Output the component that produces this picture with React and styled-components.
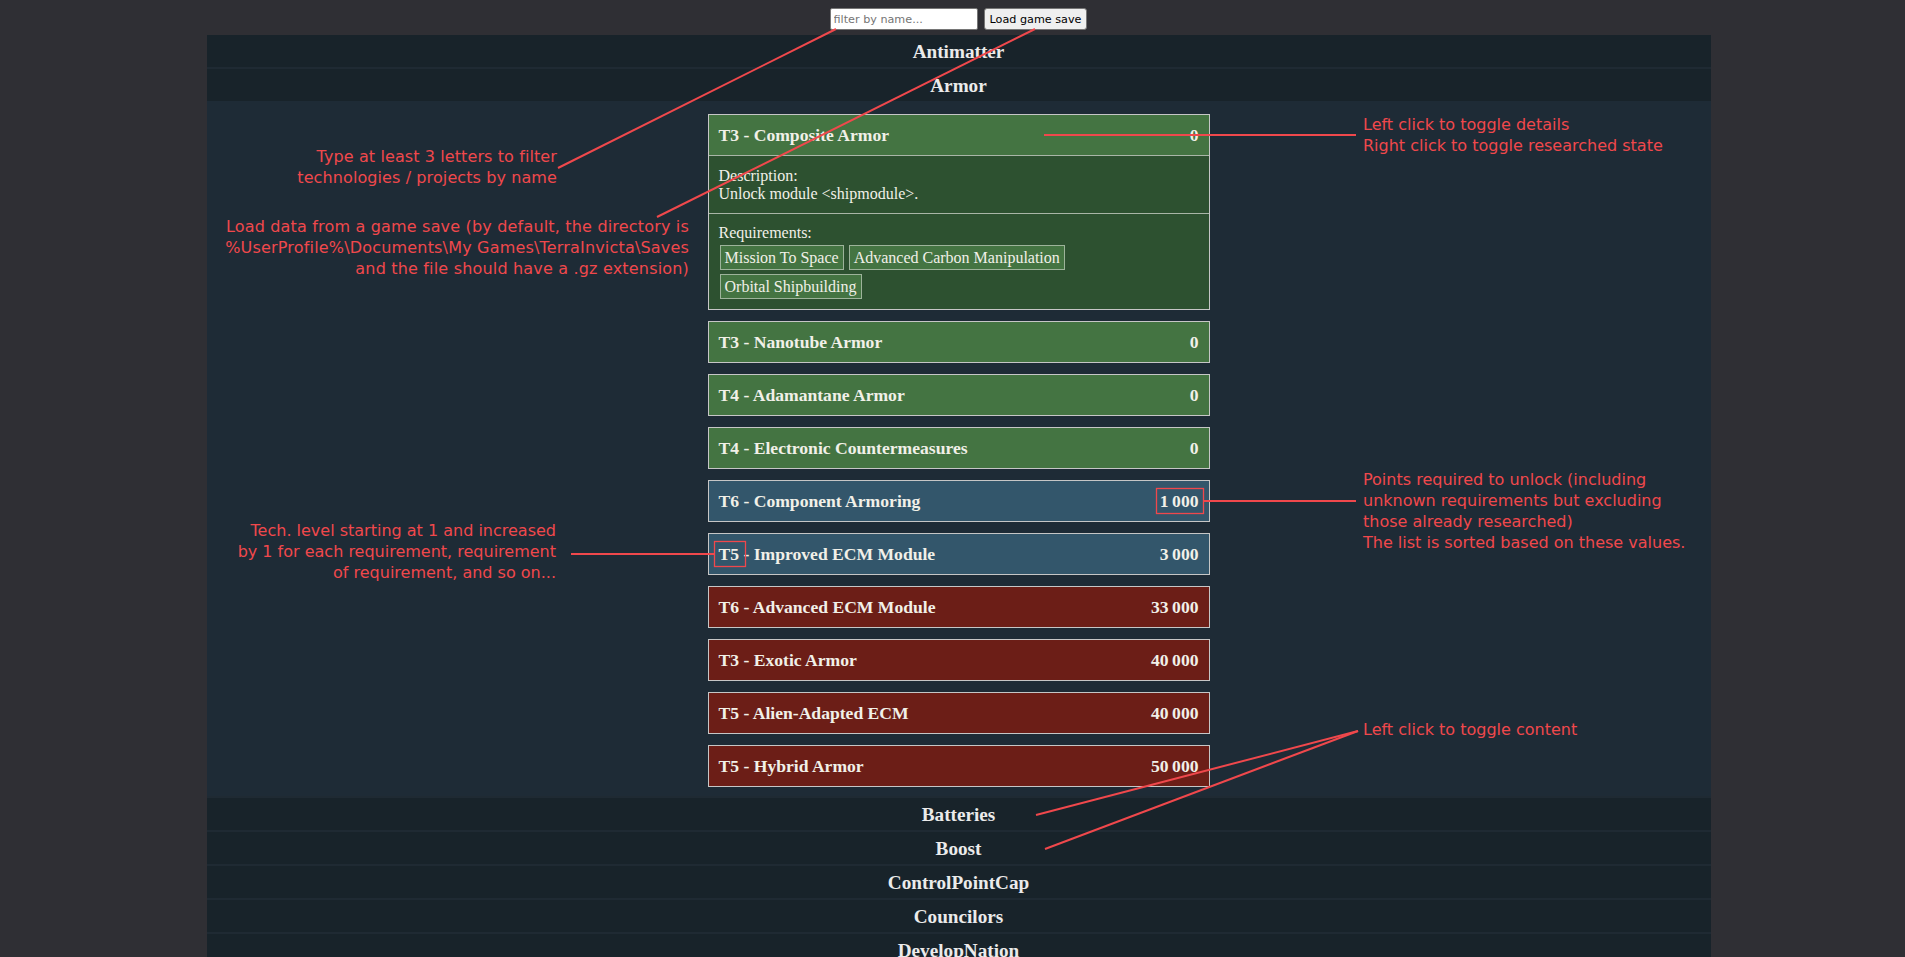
import React from 'react'
import styled, { createGlobalStyle } from 'styled-components'

const GlobalStyle = createGlobalStyle`
  html, body {
    margin: 0;
    padding: 0;
    overflow: hidden;
    background: #2f2f34;
  }
  body {
    font-family: "Liberation Serif", "Times New Roman", serif;
    color: #eeeeee;
  }
`

const tones = {
  green: { head: '#447442', body: '#2d5130', chip: '#447442' },
  blue: { head: '#33566b', body: '#26414f', chip: '#33566b' },
  red: { head: '#6c1e17', body: '#4f1712', chip: '#6c1e17' },
}

const Frame = styled.div`
  position: relative;
  width: 1917px;
  min-height: 957px;
`

const Toolbar = styled.div`
  display: flex;
  justify-content: center;
  align-items: center;
  gap: 6px;
  height: 35px;
  box-sizing: border-box;
  padding: 8px 0 5px;
`

const FilterInput = styled.input`
  width: 148px;
  height: 22px;
  box-sizing: border-box;
  border: 1px solid #767676;
  border-radius: 2px;
  padding: 1px 3px;
  background: #fff;
  font-family: "DejaVu Sans", Verdana, sans-serif;
  font-size: 11.2px;
  color: #000;
  &::placeholder {
    font-family: "DejaVu Sans", Verdana, sans-serif;
    font-size: 11.2px;
    color: #757575;
  }
`

const LoadButton = styled.button`
  height: 22px;
  box-sizing: border-box;
  padding: 0 5px;
  border: 1px solid #767676;
  border-radius: 3px;
  background: #efefef;
  color: #000;
  font-family: "DejaVu Sans", Verdana, sans-serif;
  font-size: 11.2px;
`

const Column = styled.div`
  width: 1504px;
  margin: 0 auto;
  display: flex;
  flex-direction: column;
  gap: 2px;
  background: #1f2a33;
`

const CategoryHeader = styled.div`
  background: #18232a;
  text-align: center;
  font-weight: bold;
  font-size: 19.2px;
  line-height: 22px;
  padding: 6px 0 4px;
  color: #ebebeb;
`

const CategoryBody = styled.div`
  background: #1e2b36;
  padding: 13px 0 9px;
  display: flex;
  flex-direction: column;
  align-items: center;
  gap: 11px;
`

const Card = styled.div`
  width: 502px;
  box-sizing: border-box;
  border: 1px solid #c6c6c6;
  background: ${p => tones[p.$tone].head};
  color: #f1f0e8;
`

const CardHeader = styled.div`
  display: flex;
  justify-content: space-between;
  padding: 10px;
  font-weight: bold;
  font-size: 17.6px;
  line-height: 20px;
`

const Section = styled.div`
  background: ${p => tones[p.$tone].body};
  border-top: 1px solid #a9b6a7;
  padding: ${p => (p.$first ? '11px 10px 10px' : '10px')};
  font-size: 16px;
`

const ChipList = styled.div`
  display: flex;
  flex-wrap: wrap;
  gap: 4px 5px;
  margin-top: 3px;
  padding-left: 1px;
`

const Chip = styled.span`
  border: 1px solid #9db39a;
  background: ${p => tones[p.$tone].chip};
  padding: 2px 4px;
  line-height: 19px;
`

const Overlay = styled.svg`
  position: absolute;
  top: 0;
  left: 0;
  pointer-events: none;
`

const Note = styled.div`
  position: absolute;
  top: ${p => p.$top}px;
  ${p => (p.$right != null ? `right: ${1917 - p.$right}px; text-align: right;` : `left: ${p.$left}px;`)}
  font-family: "DejaVu Sans", Verdana, sans-serif;
  font-size: 16px;
  line-height: 21px;
  letter-spacing: ${p => p.$spacing || 0}px;
  color: #f0484c;
  white-space: nowrap;
`

const N = '\u202F'

const techs = [
  { tier: 'T3', name: 'Composite Armor', cost: '0', tone: 'green', open: true },
  { tier: 'T3', name: 'Nanotube Armor', cost: '0', tone: 'green' },
  { tier: 'T4', name: 'Adamantane Armor', cost: '0', tone: 'green' },
  { tier: 'T4', name: 'Electronic Countermeasures', cost: '0', tone: 'green' },
  { tier: 'T6', name: 'Component Armoring', cost: `1${N}000`, tone: 'blue' },
  { tier: 'T5', name: 'Improved ECM Module', cost: `3${N}000`, tone: 'blue' },
  { tier: 'T6', name: 'Advanced ECM Module', cost: `33${N}000`, tone: 'red' },
  { tier: 'T3', name: 'Exotic Armor', cost: `40${N}000`, tone: 'red' },
  { tier: 'T5', name: 'Alien-Adapted ECM', cost: `40${N}000`, tone: 'red' },
  { tier: 'T5', name: 'Hybrid Armor', cost: `50${N}000`, tone: 'red' },
]

const after = ['Batteries', 'Boost', 'ControlPointCap', 'Councilors', 'DevelopNation', 'Energy', 'Espionage']

function TechCard({ tech }) {
  return (
    <Card $tone={tech.tone}>
      <CardHeader>
        <span>{tech.tier} - {tech.name}</span>
        <span>{tech.cost}</span>
      </CardHeader>
      {tech.open && (
        <>
          <Section $tone={tech.tone} $first>
            Description:<br />
            Unlock module &lt;shipmodule&gt;.
          </Section>
          <Section $tone={tech.tone}>
            Requirements:
            <ChipList>
              <Chip $tone={tech.tone}>Mission To Space</Chip>
              <Chip $tone={tech.tone}>Advanced Carbon Manipulation</Chip>
              <Chip $tone={tech.tone}>Orbital Shipbuilding</Chip>
            </ChipList>
          </Section>
        </>
      )}
    </Card>
  )
}

function Annotations() {
  const red = '#f0484c'
  const lines = [
    [836, 29, 558, 168],
    [1035, 29, 657, 217],
    [1044, 135, 1356, 135],
    [1204, 501, 1356, 501],
    [571, 554, 714, 554],
    [1358, 731, 1036, 815],
    [1358, 731, 1045, 849],
  ]
  return (
    <>
      <Overlay width="1917" height="957">
        {lines.map(([x1, y1, x2, y2], i) => (
          <line key={i} x1={x1} y1={y1} x2={x2} y2={y2} stroke={red} strokeWidth="2" />
        ))}
        <rect x="1156.5" y="488.5" width="47" height="25" fill="none" stroke={red} strokeWidth="1.3" />
        <rect x="714.5" y="541.5" width="31" height="25" fill="none" stroke={red} strokeWidth="1.3" />
      </Overlay>
      <Note $right={557} $top={146} $spacing={0.1}>
        Type at least 3 letters to filter<br />
        technologies / projects by name
      </Note>
      <Note $right={689} $top={216} $spacing={0.18}>
        Load data from a game save (by default, the directory is<br />
        %UserProfile%\Documents\My Games\TerraInvicta\Saves<br />
        and the file should have a .gz extension)
      </Note>
      <Note $right={556} $top={520}>
        Tech. level starting at 1 and increased<br />
        by 1 for each requirement, requirement<br />
        of requirement, and so on...
      </Note>
      <Note $left={1363} $top={114}>
        Left click to toggle details<br />
        Right click to toggle researched state
      </Note>
      <Note $left={1363} $top={469}>
        Points required to unlock (including<br />
        unknown requirements but excluding<br />
        those already researched)<br />
        The list is sorted based on these values.
      </Note>
      <Note $left={1363} $top={719}>
        Left click to toggle content
      </Note>
    </>
  )
}

export default function App() {
  return (
    <Frame>
      <GlobalStyle />
      <Toolbar>
        <FilterInput placeholder="filter by name..." />
        <LoadButton>Load game save</LoadButton>
      </Toolbar>
      <Column>
        <CategoryHeader>Antimatter</CategoryHeader>
        <div>
          <CategoryHeader>Armor</CategoryHeader>
          <CategoryBody>
            {techs.map(t => (
              <TechCard key={t.name} tech={t} />
            ))}
          </CategoryBody>
        </div>
        {after.map(c => (
          <CategoryHeader key={c}>{c}</CategoryHeader>
        ))}
      </Column>
      <Annotations />
    </Frame>
  )
}
